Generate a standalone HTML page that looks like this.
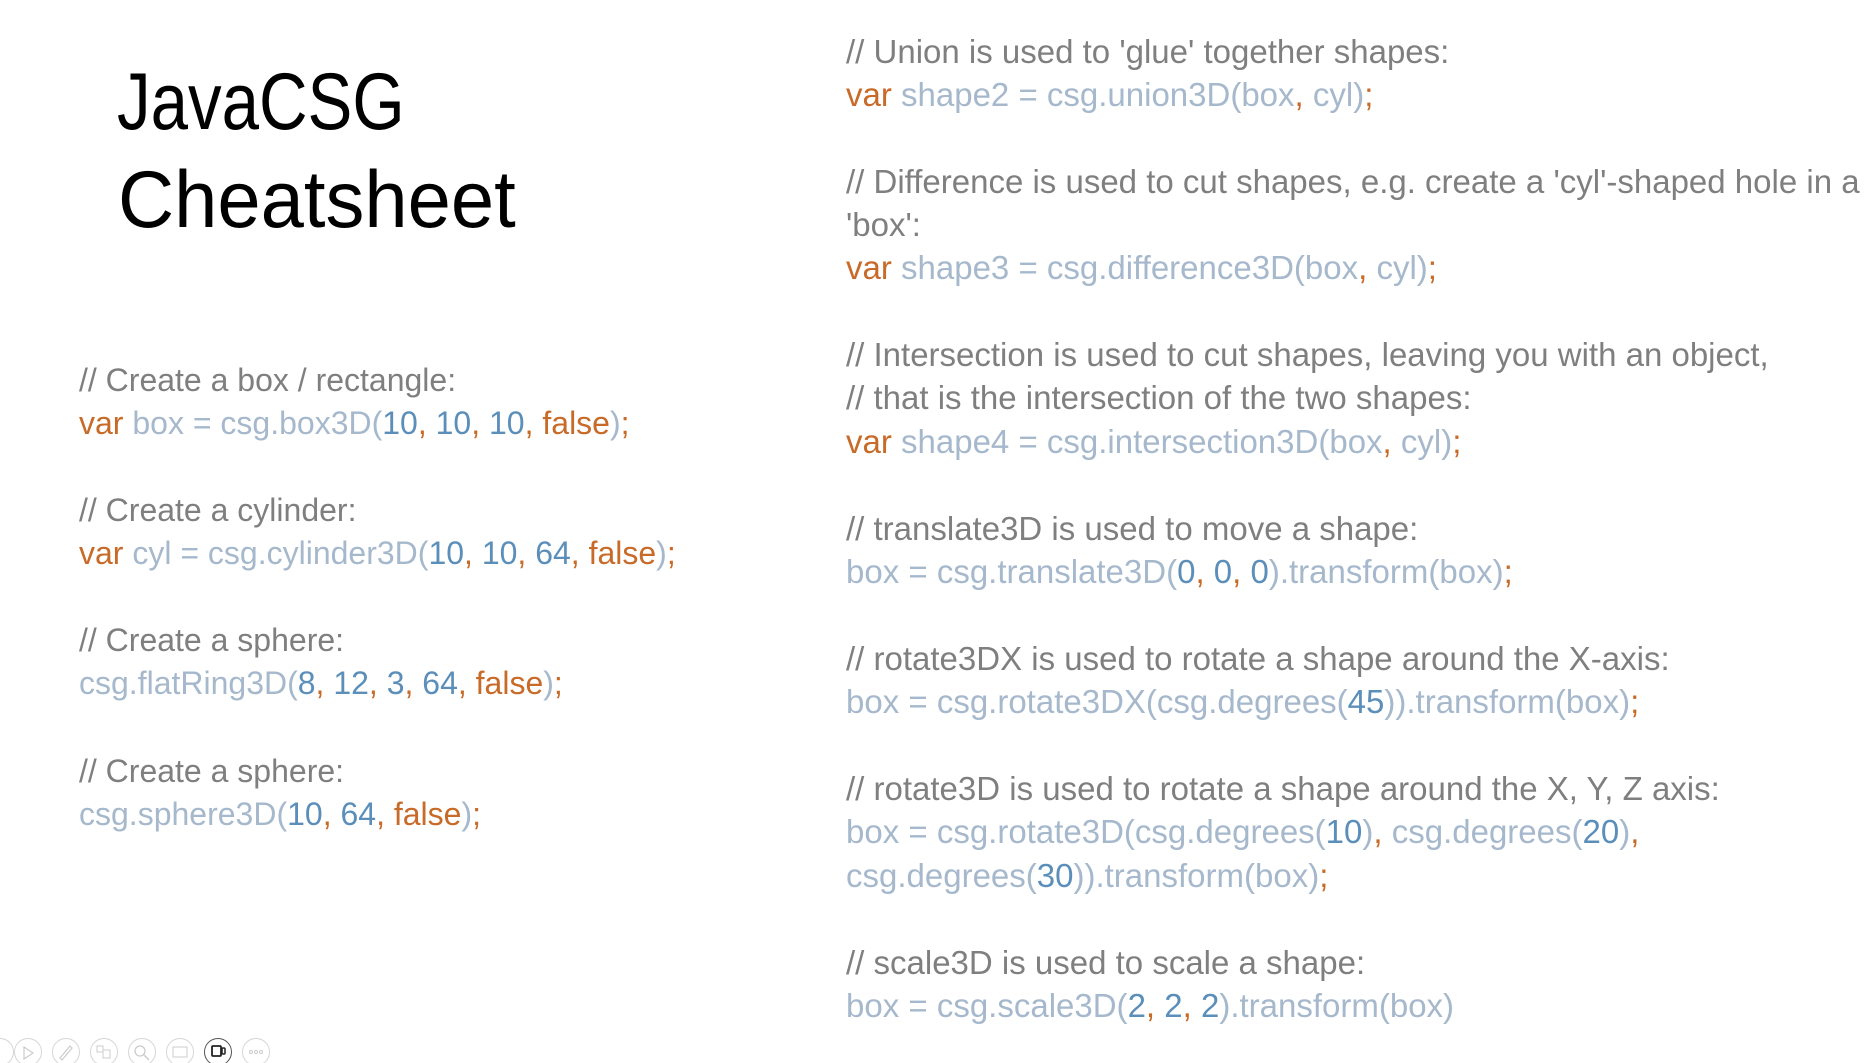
<!DOCTYPE html>
<html><head><meta charset="utf-8"><style>
html,body{margin:0;padding:0;background:#fff;width:1876px;height:1063px;overflow:hidden;position:relative}
.t{position:absolute;font-family:"Liberation Sans",sans-serif;color:#000;font-size:81px;line-height:90px;white-space:nowrap;transform-origin:left top}
.l{position:absolute;font-family:"Liberation Sans",sans-serif;font-size:33px;line-height:44px;white-space:nowrap;color:#a6b8cc}
.s{font-size:32px}
.c{color:#7f7f7f}
.k{color:#c86a28}
.n{color:#5b8fba}
.ic{position:absolute;top:1038px;width:28px;height:28px;border:1.5px solid #d6d6d6;border-radius:50%;box-sizing:border-box}
</style></head><body>
<div class="t" style="left:117px;top:57px;transform:scaleX(0.83)">JavaCSG</div>
<div class="t" style="left:118px;top:155px;transform:scaleX(0.96)">Cheatsheet</div>

<div class="l s c" style="left:79px;top:358px">// Create a box / rectangle:</div>
<div class="l s" style="left:79px;top:401px"><span class="k">var</span> box = csg.box3D(<span class="n">10</span><span class="k">,</span> <span class="n">10</span><span class="k">,</span> <span class="n">10</span><span class="k">,</span> <span class="k">false</span>)<span class="k">;</span></div>
<div class="l s c" style="left:79px;top:488px">// Create a cylinder:</div>
<div class="l s k" style="left:79px;top:531px">var <span style="color:#a6b8cc">cyl = csg.cylinder3D(</span><span class="n">10</span>, <span class="n">10</span>, <span class="n">64</span>, false<span style="color:#a6b8cc">)</span>;</div>
<div class="l s c" style="left:79px;top:618px">// Create a sphere:</div>
<div class="l s" style="left:79px;top:661px">csg.flatRing3D(<span class="n">8</span><span class="k">,</span> <span class="n">12</span><span class="k">,</span> <span class="n">3</span><span class="k">,</span> <span class="n">64</span><span class="k">,</span> <span class="k">false</span>)<span class="k">;</span></div>
<div class="l s c" style="left:79px;top:749px">// Create a sphere:</div>
<div class="l s" style="left:79px;top:792px">csg.sphere3D(<span class="n">10</span><span class="k">,</span> <span class="n">64</span><span class="k">,</span> <span class="k">false</span>)<span class="k">;</span></div>

<div class="l c" style="left:846px;top:30px">// Union is used to 'glue' together shapes:</div>
<div class="l" style="left:846px;top:73px"><span class="k">var</span> shape2 = csg.union3D(box<span class="k">,</span> cyl)<span class="k">;</span></div>
<div class="l c" style="left:846px;top:160px">// Difference is used to cut shapes, e.g. create a 'cyl'-shaped hole in a</div>
<div class="l c" style="left:846px;top:203px">'box':</div>
<div class="l" style="left:846px;top:246px"><span class="k">var</span> shape3 = csg.difference3D(box<span class="k">,</span> cyl)<span class="k">;</span></div>
<div class="l c" style="left:846px;top:333px">// Intersection is used to cut shapes, leaving you with an object,</div>
<div class="l c" style="left:846px;top:376px">// that is the intersection of the two shapes:</div>
<div class="l" style="left:846px;top:420px"><span class="k">var</span> shape4 = csg.intersection3D(box<span class="k">,</span> cyl)<span class="k">;</span></div>
<div class="l c" style="left:846px;top:507px">// translate3D is used to move a shape:</div>
<div class="l" style="left:846px;top:550px">box = csg.translate3D(<span class="n">0</span><span class="k">,</span> <span class="n">0</span><span class="k">,</span> <span class="n">0</span>).transform(box)<span class="k">;</span></div>
<div class="l c" style="left:846px;top:637px">// rotate3DX is used to rotate a shape around the X-axis:</div>
<div class="l" style="left:846px;top:680px">box = csg.rotate3DX(csg.degrees(<span class="n">45</span>)).transform(box)<span class="k">;</span></div>
<div class="l c" style="left:846px;top:767px">// rotate3D is used to rotate a shape around the X, Y, Z axis:</div>
<div class="l" style="left:846px;top:810px">box = csg.rotate3D(csg.degrees(<span class="n">10</span>)<span class="k">,</span> csg.degrees(<span class="n">20</span>)<span class="k">,</span></div>
<div class="l" style="left:846px;top:854px">csg.degrees(<span class="n">30</span>)).transform(box)<span class="k">;</span></div>
<div class="l c" style="left:846px;top:941px">// scale3D is used to scale a shape:</div>
<div class="l" style="left:846px;top:984px">box = csg.scale3D(<span class="n">2</span><span class="k">,</span> <span class="n">2</span><span class="k">,</span> <span class="n">2</span>).transform(box)</div>

<div class="ic" style="left:-14px"></div>
<div class="ic" style="left:14px"></div>
<div class="ic" style="left:52px"></div>
<div class="ic" style="left:90px"></div>
<div class="ic" style="left:128px"></div>
<div class="ic" style="left:166px"></div>
<div class="ic" style="left:204px;border-color:#555"></div>
<div class="ic" style="left:242px"></div>
<svg style="position:absolute;left:0;top:1038px" width="270" height="25">
<path d="M24 9 L33 15 L24 21 Z" fill="none" stroke="#ccc" stroke-width="1.2"/>
<path d="M60 20 L70 8 L72 10 L62 22 Z" fill="none" stroke="#ccc" stroke-width="1.2"/>
<rect x="97" y="8" width="6" height="6" fill="none" stroke="#ccc"/><rect x="103" y="12" width="7" height="8" fill="none" stroke="#ccc"/>
<circle cx="140" cy="13" r="5" fill="none" stroke="#ccc" stroke-width="1.3"/><path d="M144 17 L149 22" stroke="#ccc" stroke-width="1.5"/>
<rect x="173" y="9" width="14" height="10" fill="none" stroke="#ccc"/>
<rect x="212" y="8" width="9" height="10" rx="1" fill="none" stroke="#222" stroke-width="1.8"/><rect x="222" y="10" width="3" height="6" rx="1" fill="none" stroke="#222" stroke-width="1.5"/>
<circle cx="251" cy="14" r="1.5" fill="none" stroke="#ccc"/><circle cx="256" cy="14" r="1.5" fill="none" stroke="#ccc"/><circle cx="261" cy="14" r="1.5" fill="none" stroke="#ccc"/>
</svg>
</body></html>
